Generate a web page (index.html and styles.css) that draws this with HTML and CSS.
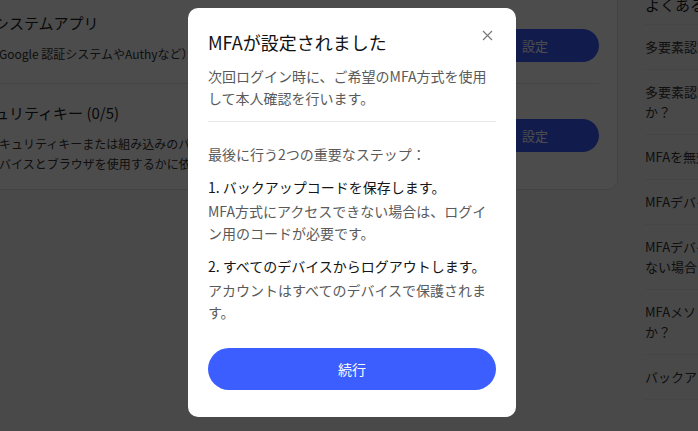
FILE: index.html
```html
<!DOCTYPE html>
<html lang="ja">
<head>
    <meta charset="UTF-8">
    <meta name="viewport" content="width=device-width, initial-scale=1.0">
    <title>MFA設定</title>
    <link rel="stylesheet" href="styles.css">
</head>
<body>
    <div class="page">
        <div class="method-card">
            <div class="method-row">
                <div class="method-text">
                    <div class="method-title">認証システムアプリ</div>
                    <div class="method-desc">（Google 認証システムやAuthyなど）</div>
                </div>
                <button class="method-btn">設定</button>
            </div>
            <div class="method-row">
                <div class="method-text">
                    <div class="method-title">セキュリティキー (0/5)</div>
                    <div class="method-desc">セキュリティキーまたは組み込みのパスキーが使えるかどうかは、お使いのデバイスとブラウザを使用するかに依存します。</div>
                </div>
                <button class="method-btn">設定</button>
            </div>
        </div>

        <aside class="faq">
            <div class="faq-title">よくある質問</div>
            <div class="faq-item">多要素認証とは何ですか？</div>
            <div class="faq-item">多要素認証を設定する必要がありますか？</div>
            <div class="faq-item">MFAを無効にする方法</div>
            <div class="faq-item">MFAデバイスを紛失した場合</div>
            <div class="faq-item">MFAデバイスを紛失しコードを使用できない場合はどうすればよいですか？</div>
            <div class="faq-item">MFAメソッドはどのように変更できますか？</div>
            <div class="faq-item">バックアップコードとは</div>
        </aside>
    </div>

    <div class="overlay">
        <div class="dialog">
            <button class="dialog-close" aria-label="閉じる">
                <svg width="11" height="11" viewBox="0 0 11 11">
                    <path d="M1 1L10 10M10 1L1 10" stroke="#7a7a7a" stroke-width="1.2" fill="none"/>
                </svg>
            </button>
            <h2 class="dialog-title">MFAが設定されました</h2>
            <p class="dialog-lead">次回ログイン時に、ご希望のMFA方式を使用して本人確認を行います。</p>
            <hr class="dialog-divider">
            <p class="dialog-intro">最後に行う2つの重要なステップ：</p>
            <div class="step">
                <div class="step-title">1. バックアップコードを保存します。</div>
                <div class="step-desc">MFA方式にアクセスできない場合は、ログイン用のコードが必要です。</div>
            </div>
            <div class="step">
                <div class="step-title">2. すべてのデバイスからログアウトします。</div>
                <div class="step-desc">アカウントはすべてのデバイスで保護されます。</div>
            </div>
            <button class="dialog-btn">続行</button>
        </div>
    </div>
</body>
</html>
```

FILE: styles.css
```css
:root {
    --primary: #3d5eff;
    --page: #f4f4f4;
    --card: #ffffff;
    --line: #e6e6e6;
    --text: #1c1c1c;
    --muted: #5a5a5a;
}

body {
    margin: 0;
    font-family: "Noto Sans CJK JP", "Noto Sans", sans-serif;
    background: var(--page);
    color: var(--text);
    height: 100vh;
    overflow: hidden;
}

.page {
    display: flex;
    align-items: flex-start;
    gap: 27px;
    margin: -6px 0 0 -40px;
}

.method-card {
    flex: 0 0 658px;
    box-sizing: border-box;
    background: var(--card);
    border: 1px solid #e2e2e2;
    border-top: none;
    border-radius: 0 0 10px 10px;
    padding: 0 18px 0 3px;
}

.method-row {
    display: flex;
    align-items: flex-start;
    justify-content: space-between;
    padding: 17px 0 19px;
    border-bottom: 1px solid var(--line);
}

.method-row:last-child {
    border-bottom: none;
    padding-bottom: 15px;
}

.method-title {
    font-size: 15px;
    line-height: 24px;
}

.method-desc {
    margin: 9px 0 0 23px;
    font-size: 12px;
    line-height: 20px;
    color: #333;
    max-width: 414px;
}

.method-btn {
    flex: 0 0 128px;
    height: 33px;
    margin-top: 18px;
    border: none;
    border-radius: 17px;
    background: var(--primary);
    color: #fff;
    font-family: inherit;
    font-size: 13px;
}

.faq {
    flex: 0 0 240px;
}

.faq-title {
    font-size: 15px;
    line-height: 22px;
    padding-bottom: 8px;
    border-bottom: 1px solid var(--line);
}

.faq-item {
    font-size: 13px;
    line-height: 20px;
    padding: 12px 0 12px;
    border-bottom: 1px solid var(--line);
    color: #333;
}

/* modal */
.overlay {
    position: fixed;
    inset: 0;
    background: rgba(0, 0, 0, 0.7);
    display: flex;
    align-items: center;
    justify-content: center;
    padding: 0 0 6px 6px;
}

.dialog {
    position: relative;
    width: 328px;
    box-sizing: border-box;
    background: #fff;
    border-radius: 10px;
    padding: 21px 20px 27px;
}

.dialog-close {
    position: absolute;
    top: 22px;
    right: 23px;
    padding: 0;
    border: none;
    background: none;
    line-height: 0;
}

.dialog-title {
    margin: 0;
    font-size: 18px;
    font-weight: 400;
    line-height: 26px;
    color: #111;
}

.dialog-lead {
    margin: 10px 0 0;
    font-size: 14px;
    line-height: 22px;
    color: var(--muted);
}

.dialog-divider {
    margin: 12px 0 0;
    border: none;
    border-top: 1px solid var(--line);
}

.dialog-intro {
    margin: 21px 0 0;
    font-size: 14px;
    line-height: 22px;
    color: var(--muted);
}

.step {
    margin-top: 11px;
}

.step-title {
    font-size: 14px;
    line-height: 22px;
    color: #151515;
}

.step-desc {
    margin-top: 2px;
    font-size: 14px;
    line-height: 22px;
    color: var(--muted);
}

.dialog-btn {
    display: block;
    width: 100%;
    height: 42px;
    margin-top: 25px;
    border: none;
    border-radius: 21px;
    background: var(--primary);
    color: #fff;
    font-family: inherit;
    font-size: 14px;
}
```
